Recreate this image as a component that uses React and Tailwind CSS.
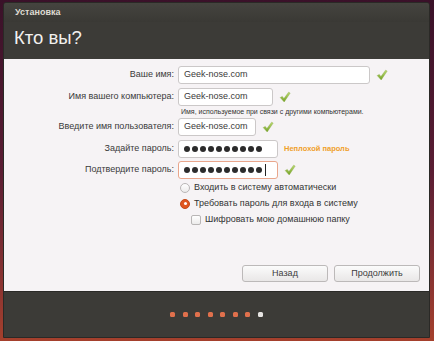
import React from "react";

const FONT = { fontFamily: '"Liberation Sans", "DejaVu Sans", sans-serif' };

const Check = () => (
  <svg width="12" height="12" viewBox="0 0 12 12" className="shrink-0">
    <defs>
      <linearGradient id="ck" x1="0" y1="0" x2="0" y2="1">
        <stop offset="0" stopColor="#bedc74" />
        <stop offset="1" stopColor="#72a026" />
      </linearGradient>
    </defs>
    <path
      d="M1.2 6.6 L3.3 5.4 L4.9 7.6 L9.6 1.2 L11.2 2.1 L5.2 11 Z"
      fill="url(#ck)"
      stroke="#86aa40"
      strokeWidth="0.4"
      strokeLinejoin="round"
    />
  </svg>
);

const Field = ({ width, children, warn }) => (
  <div
    className={`h-[18px] shrink-0 flex items-center px-[5px] rounded-[3px] bg-white border overflow-hidden whitespace-nowrap ${
      warn ? "border-[#e9a68c]" : "border-[#cbc8c8]"
    } ${width}`}
  >
    {children}
  </div>
);

const Dots = ({ caret }) => (
  <span className="flex items-center gap-[1.6px]">
    {Array.from({ length: 10 }).map((_, i) => (
      <span key={i} className="w-[6.4px] h-[6.4px] rounded-full bg-[#2b2b2b]" />
    ))}
    {caret && <span className="ml-[1px] w-px h-[12px] bg-[#222]" />}
  </span>
);

const Row = ({ label, children, className = "" }) => (
  <div className={`flex items-center h-[18px] ${className}`}>
    <div className="w-[174px] shrink-0 pr-[4px] text-right text-[9px] text-[#3a3a3a] whitespace-nowrap">
      {label}
    </div>
    <div className="flex items-center gap-[6px]">{children}</div>
  </div>
);

const App = () => {
  return (
    <div
      className="w-[434px] h-[341px] bg-gradient-to-b from-[#3a1129] via-[#5a1d33] to-[#a5402c] pl-[3px] pr-[4px] pt-[2px] pb-[3px]"
      style={FONT}
    >
      <div className="w-full h-full flex flex-col border border-[#2a2926] rounded-t-[3px] overflow-hidden">
        {/* header */}
        <div className="bg-[#3c3b37] h-[56px] flex flex-col">
          <div className="h-[19px] flex items-center px-[11px] bg-gradient-to-b from-[#45443f] to-[#3a3935] text-[9px] font-bold text-[#dfdbd2]">
            Установка
          </div>
          <div className="px-[10px] pt-[7px] text-[18.5px] text-[#f2f1ef] leading-none">
            Кто вы?
          </div>
        </div>

        {/* content */}
        <div className="flex-1 bg-[#f6f3f5] flex flex-col pt-[7px] pb-[9px] text-[#3c3c3c]">
          <div className="flex flex-col">
            <Row label="Ваше имя:">
              <Field width="w-[192px]">
                <span className="text-[9px] text-[#3a3a3a]">Geek-nose.com</span>
              </Field>
              <Check />
            </Row>
            <Row label="Имя вашего компьютера:" className="mt-[4px]">
              <Field width="w-[95px]">
                <span className="text-[9px] text-[#3a3a3a]">Geek-nose.com</span>
              </Field>
              <Check />
            </Row>
            <div className="pl-[177px] h-[12px] flex items-center text-[7px] text-[#333] whitespace-nowrap">
              Имя, используемое при связи с другими компьютерами.
            </div>
            <Row label="Введите имя пользователя:">
              <Field width="w-[78px]">
                <span className="text-[9px] text-[#3a3a3a]">Geek-nose.com</span>
              </Field>
              <Check />
            </Row>
            <Row label="Задайте пароль:" className="mt-[4px]">
              <Field width="w-[100px]">
                <Dots />
              </Field>
              <span className="text-[7.5px] font-bold text-[#f0a02a] whitespace-nowrap">
                Неплохой пароль
              </span>
            </Row>
            <Row label="Подтвердите пароль:" className="mt-[3px]">
              <Field width="w-[100px]" warn>
                <Dots caret />
              </Field>
              <Check />
            </Row>

            <div className="pl-[176px] mt-[3px] flex flex-col gap-[5px] text-[9px] text-[#333] whitespace-nowrap">
              <label className="flex items-center gap-[4px] h-[11px]">
                <span className="w-[10px] h-[10px] rounded-full border border-[#b9b6b6] bg-gradient-to-b from-white to-[#ecebeb]" />
                Входить в систему автоматически
              </label>
              <label className="flex items-center gap-[4px] h-[11px]">
                <span className="w-[10px] h-[10px] rounded-full bg-[#e0561f] border border-[#c44a18] flex items-center justify-center">
                  <span className="w-[3px] h-[3px] rounded-full bg-white" />
                </span>
                Требовать пароль для входа в систему
              </label>
              <label className="flex items-center gap-[4px] h-[11px] pl-[11px]">
                <span className="w-[10px] h-[10px] rounded-[2px] border border-[#b9b6b6] bg-gradient-to-b from-white to-[#ecebeb]" />
                Шифровать мою домашнюю папку
              </label>
            </div>
          </div>

          <div className="flex-1" />

          <div className="flex justify-end gap-[6px] pr-[9px]">
            <button className="w-[86px] h-[17px] rounded-[3px] border border-[#bcb9b9] bg-gradient-to-b from-[#fbfbfb] to-[#e9e7e7] text-[9px] text-[#3c3c3c]">
              Назад
            </button>
            <button className="w-[86px] h-[17px] rounded-[3px] border border-[#bcb9b9] bg-gradient-to-b from-[#fbfbfb] to-[#e9e7e7] text-[9px] text-[#3c3c3c]">
              Продолжить
            </button>
          </div>
        </div>

        {/* footer */}
        <div className="h-[46px] bg-[#3c3b37] border-t border-[#2b2a27] flex items-center justify-center gap-[7.5px]">
          {Array.from({ length: 7 }).map((_, i) => (
            <span key={i} className="w-[5px] h-[5px] rounded-[1.5px] bg-[#e0704c]" />
          ))}
          <span className="w-[5px] h-[5px] rounded-[1.5px] bg-[#e6e4e2]" />
        </div>
      </div>
    </div>
  );
};

export default App;
